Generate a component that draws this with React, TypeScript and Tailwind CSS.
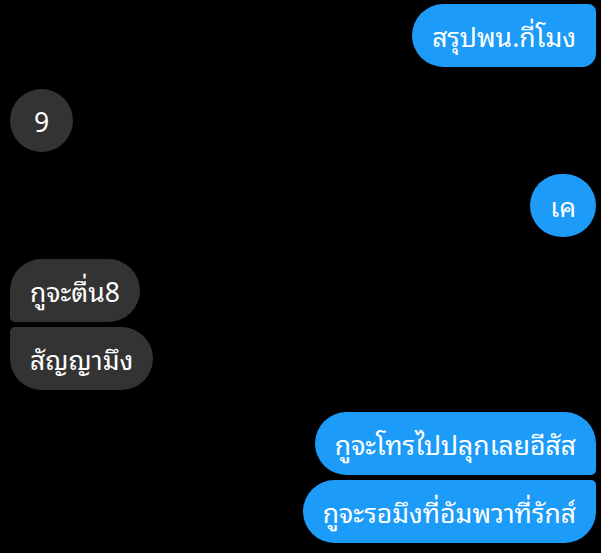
import React from "react";

type Msg = { text: string; me: boolean; gap: "big" | "small"; corners: string };

const msgs: Msg[] = [
  { text: "สรุปพน.กี่โมง", me: true, gap: "big", corners: "rounded-[32px] rounded-tr-[8px] rounded-br-[14px]" },
  { text: "9", me: false, gap: "big", corners: "rounded-full" },
  { text: "เค", me: true, gap: "big", corners: "rounded-full" },
  { text: "กูจะตื่น8", me: false, gap: "big", corners: "rounded-[32px] rounded-bl-[5px]" },
  { text: "สัญญามึง", me: false, gap: "small", corners: "rounded-[32px] rounded-tl-[5px]" },
  { text: "กูจะโทรไปปลุกเลยอีสัส", me: true, gap: "big", corners: "rounded-[32px] rounded-br-[5px]" },
  { text: "กูจะรอมึงที่อัมพวาที่รักส์", me: true, gap: "small", corners: "rounded-[32px] rounded-tr-[5px]" },
];

export default function App() {
  return (
    <div
      className="w-[601px] h-[553px] bg-black flex flex-col pt-[4px] pl-[10px] pr-[5px] overflow-hidden"
      style={{ fontFamily: '"Noto Sans Thai Looped", "Noto Sans", "Noto Sans Thai", sans-serif' }}
    >
      {msgs.map((m, i) => (
        <div
          key={i}
          className={
            (i === 0 ? "" : m.gap === "big" ? "mt-[22px] " : "mt-[5px] ") +
            "flex " +
            (m.me ? "justify-end" : "justify-start")
          }
        >
          <div
            className={
              "h-[63px] min-w-[63px] px-[20px] flex items-center justify-center text-white text-[26.5px] leading-none " +
              m.corners +
              (m.me ? " bg-[#1d9bf8]" : " bg-[#333333]")
            }
          >
            {m.text}
          </div>
        </div>
      ))}
    </div>
  );
}
